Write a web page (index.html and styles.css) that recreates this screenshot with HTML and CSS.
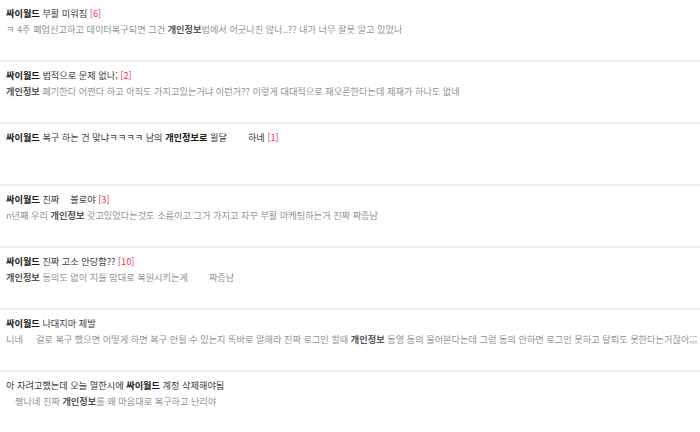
FILE: index.html
```html
<!DOCTYPE html>
<html lang="ko">
<head>
<meta charset="utf-8">
<link rel="stylesheet" href="styles.css">
</head>
<body>
<ul class="list">
  <li class="item">
    <div class="title"><b>싸이월드</b> 부활 미워짐 <span class="cnt">[6]</span></div>
    <div class="body">ㅋ 4주 폐업신고하고 데이터복구되면 그건 <b>개인정보</b>법에서 어긋나진 않나..?? 내가 너무 잘못 알고 있었나</div>
  </li>
  <li class="item">
    <div class="title"><b>싸이월드</b> 법적으로 문제 없나; <span class="cnt">[2]</span></div>
    <div class="body"><b>개인정보</b> 폐기한다 어쩐다 하고 아직도 가지고있는거냐 이런거?? 이렇게 대대적으로 재오픈한다는데 제재가 하나도 없네</div>
    <div class="faint">.</div>
  </li>
  <li class="item">
    <div class="title"><b>싸이월드</b> 복구 하는 건 맞냐ㅋㅋㅋㅋ 남의 <b>개인정보로</b> 윌달<span class="gap g22"></span>하네 <span class="cnt">[1]</span></div>
  </li>
  <li class="item">
    <div class="title"><b>싸이월드</b> 진짜<span class="gap g10"></span>볼로야 <span class="cnt">[3]</span></div>
    <div class="body">n년째 우리 <b>개인정보</b> 갖고있었다는것도 소름이고 그거 가지고 자꾸 부활 마케팅하는거 진짜 짜증남</div>
    <div class="faint indent">ㆍㆍ ㆍㆍ</div>
  </li>
  <li class="item">
    <div class="title"><b>싸이월드</b> 진짜 고소 안당함?? <span class="cnt">[10]</span></div>
    <div class="body"><b>개인정보</b> 동의도 없이 지들 맘대로 복원시키는게<span class="gap g22"></span>짜증남</div>
  </li>
  <li class="item">
    <div class="title"><b>싸이월드</b> 나대지마 제발</div>
    <div class="body">니네<span class="gap g12"></span>걸로 복구 했으면 어떻게 하면 복구 안될 수 있는지 똑바로 말해라 진짜 로그인 할때 <b>개인정보</b> 동영 동의 물어본다는데 그럼 동의 안하면 로그인 못하고 탈퇴도 못한다는거잖아;;;</div>
  </li>
  <li class="item">
    <div class="title">아 자려고했는데 오늘 열한시에 <b>싸이월드</b> 계정 삭제해야됨</div>
    <div class="body"><span class="gap g8"></span>짱나네 진짜 <b>개인정보</b>를 왜 마음대로 복구하고 난리야</div>
    <div class="faint">ㆍㆍㆍ</div>
  </li>
</ul>
</body>
</html>
```
FILE: styles.css
```css
html, body {
  margin: 0;
  padding: 0;
  background: #ffffff;
}
body {
  font-family: "Noto Sans CJK KR", "Noto Sans", sans-serif;
  font-size: 9.2px;
}
.list {
  list-style: none;
  margin: 0;
  padding: 0;
}
.item {
  height: 62px;
  padding: 7px 6px 0;
  box-sizing: border-box;
  border-bottom: 2px solid #eeeeee;
  overflow: hidden;
}
.title {
  line-height: 12px;
  color: #3a3a3a;
  white-space: nowrap;
}
.title b {
  color: #1a1a1a;
  font-weight: bold;
}
.cnt {
  color: #f0334a;
}
.body {
  margin-top: 4px;
  line-height: 12px;
  color: #929292;
  white-space: nowrap;
}
.body b {
  color: #555555;
  font-weight: bold;
}
.faint {
  margin-top: 1px;
  line-height: 12px;
  color: #e8e8e8;
}
.indent {
  padding-left: 19px;
}
.gap {
  display: inline-block;
}
.g8 { width: 9px; }
.g10 { width: 11px; }
.g12 { width: 13px; }
.g22 { width: 21px; }
```
